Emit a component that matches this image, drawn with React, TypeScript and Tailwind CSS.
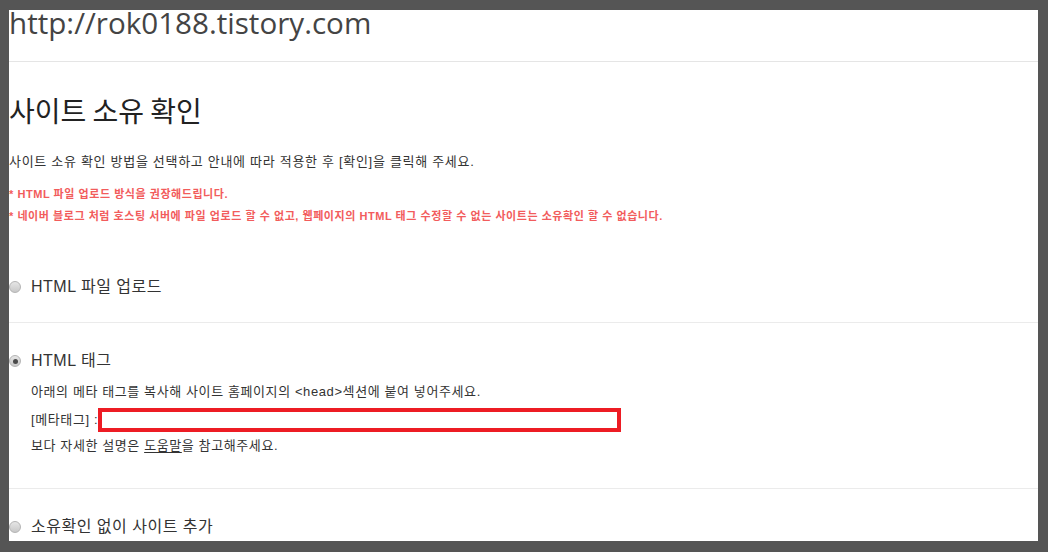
const kr = "font-['Liberation_Sans','Noto_Sans_CJK_KR',sans-serif]";

function Radio({ checked = false }: { checked?: boolean }) {
	return (
		<span className="relative inline-flex h-[12px] w-[12px] shrink-0 items-center justify-center rounded-full border border-[#b4b4b4] bg-gradient-to-b from-[#e6e6e6] to-[#c8c8c8]">
			{checked && <span className="h-[5px] w-[5px] rounded-full bg-[#4a4a4a]" />}
		</span>
	);
}

function Option({ label, checked = false }: { label: string; checked?: boolean }) {
	return (
		<div className="flex items-center gap-[10px] h-[24px]">
			<Radio checked={checked} />
			<span className={`text-[16px] tracking-[0.5px] text-[#333] ${kr}`}>{label}</span>
		</div>
	);
}

export default function App() {
	return (
		<div className="h-[552px] w-[1048px] overflow-hidden bg-[#555555] pt-[10px] pl-[9px] pr-[10px] pb-[11px]">
			<div className="h-full bg-white">
				<div className="h-[52px] border-b border-[#e5e5e5] pt-[1px]">
					<p className="font-['Open_Sans',sans-serif] text-[29.6px] leading-[23px] text-[#444]">
						http://rok0188.tistory.com
					</p>
				</div>

				<h1 className="mt-[32px] font-['Noto_Sans_CJK_KR',sans-serif] text-[28px] leading-[32px] text-[#222]">
					사이트 소유 확인
				</h1>

				<p className={`mt-[26px] text-[13px] tracking-[0.7px] leading-[20px] text-[#333] ${kr}`}>
					사이트 소유 확인 방법을 선택하고 안내에 따라 적용한 후 [확인]을 클릭해 주세요.
				</p>

				<div className={`mt-[11px] text-[11px] font-bold tracking-[0.55px] leading-[22px] text-[#f25c5c] ${kr}`}>
					<p>* HTML 파일 업로드 방식을 권장해드립니다.</p>
					<p>* 네이버 블로그 처럼 호스팅 서버에 파일 업로드 할 수 없고, 웹페이지의 HTML 태그 수정할 수 없는 사이트는 소유확인 할 수 없습니다.</p>
				</div>

				<div className="mt-[48px] border-b border-[#ebebeb] pb-[23px]">
					<Option label="HTML 파일 업로드" />
				</div>

				<div className="border-b border-[#ebebeb] pt-[26px] pb-[32px]">
					<Option label="HTML 태그" checked />
					<div className={`mt-[9px] pl-[22px] text-[13px] tracking-[0.6px] text-[#333] ${kr}`}>
						<p className="leading-[20px]">
							아래의 메타 태그를 복사해 사이트 홈페이지의 &lt;head&gt;섹션에 붙여 넣어주세요.
						</p>
						<div className="mt-[6px] flex h-[24px] items-center">
							<span>[메타태그] :</span>
							<span className="ml-[0px] h-[24px] w-[523px] border-[4px] border-[#ed1c24] bg-white" />
						</div>
						<p className="mt-[4px] leading-[20px]">
							보다 자세한 설명은 <span className="underline underline-offset-2">도움말</span>을 참고해주세요.
						</p>
					</div>
				</div>

				<div className="pt-[26px]">
					<Option label="소유확인 없이 사이트 추가" />
				</div>
			</div>
		</div>
	);
}
